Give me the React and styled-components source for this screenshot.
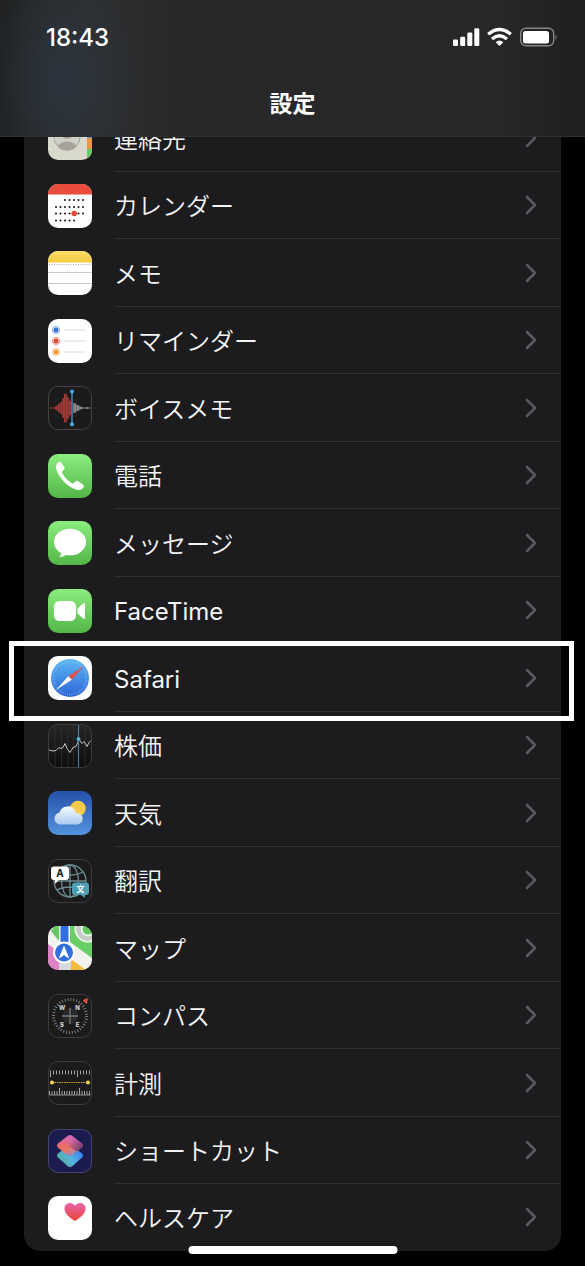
import React from 'react'
import styled, { createGlobalStyle } from 'styled-components'

const GREY = '#3c3c3e'

function Tile({ fill, stroke, children }) {
    return (
        <TileSvg viewBox="0 0 44 44" aria-hidden="true">
            <rect width="44" height="44" rx="10" fill={fill} />
            {children}
            {stroke && <rect x=".5" y=".5" width="43" height="43" rx="9.5" fill="none" stroke={stroke} />}
        </TileSvg>
    )
}

const GreenGradient = ({ id }) => (
    <linearGradient id={id} x1="0" y1="0" x2="0" y2="1">
        <stop offset="0" stopColor="#8aed7e" />
        <stop offset="1" stopColor="#53b748" />
    </linearGradient>
)

function Contacts() {
    return (
        <TileSvg viewBox="0 0 44 44" aria-hidden="true">
            <clipPath id="contactsClip"><rect width="44" height="44" rx="10" /></clipPath>
            <g clipPath="url(#contactsClip)">
                <rect width="44" height="44" fill="#d9d8cd" />
                <rect x="39" width="5" height="22" fill="#5d8fc4" />
                <rect x="39" y="22" width="5" height="11" fill="#ee9645" />
                <rect x="39" y="33" width="5" height="11" fill="#67cb6a" />
                <circle cx="19" cy="21" r="13" fill="#d0cfc4" stroke="#a6a59d" />
                <circle cx="19" cy="17" r="6" fill="#a6a39c" />
                <path d="M9.5 30c4-6 15-6 19 0-3 6-16 6-19 0z" fill="#a6a39c" />
            </g>
        </TileSvg>
    )
}

function Calendar() {
    const lines = [[16, 17, 5], [23, 8, 7], [29.5, 8, 7], [36.5, 8, 5]]
    return (
        <Tile fill="#fff">
            <path d="M0 10.5V10A10 10 0 0 1 10 0h24a10 10 0 0 1 10 10v.5z" fill="#e94b3d" />
            {lines.map(([y, x, n]) => Array.from({ length: n }, (_, i) => (
                <circle key={`${y}-${i}`} cx={x + i * 4.5} cy={y} r="1" fill="#111" />
            )))}
            <circle cx="26.2" cy="29.5" r="2.8" fill="#e5483b" />
        </Tile>
    )
}

function Notes() {
    return (
        <Tile fill="#fff">
            <defs>
                <linearGradient id="notesTop" x1="0" y1="0" x2="0" y2="1">
                    <stop offset="0" stopColor="#fbdc6b" />
                    <stop offset="1" stopColor="#f4cb3d" />
                </linearGradient>
            </defs>
            <path d="M0 11.5V10A10 10 0 0 1 10 0h24a10 10 0 0 1 10 10v1.5z" fill="url(#notesTop)" />
            <path d="M1 13.5h42" stroke="#aaa" strokeDasharray="1 1.4" />
            <path d="M0 21.5h44M0 32.5h44" stroke="#cacaca" />
        </Tile>
    )
}

function Reminders() {
    return (
        <Tile fill="#fff">
            {[[11, '#3a72dd'], [22, '#e2473c'], [33, '#f19a37']].map(([y, c]) => (
                <g key={y}>
                    <circle cx="8" cy={y} r="3.6" fill="none" stroke={c} strokeOpacity=".6" />
                    <circle cx="8" cy={y} r="2.5" fill={c} />
                    <path d={`M16 ${y}h22`} stroke="#dcdcdc" />
                </g>
            ))}
        </Tile>
    )
}

function VoiceMemos() {
    const red = [1, 1, 1, 3, 5, 8, 10, 13, 20, 29, 28, 22, 17, 14]
    const white = [10, 9, 6, 5, 3, 2, 1, 1, 2, 1, 1]
    return (
        <Tile fill="#1b1b1c" stroke="#434345">
            {red.map((h, i) => (
                <rect key={i} x={2 + i * 1.55} y={22 - h / 2} width="1.6" height={h} fill="#9c3a35" />
            ))}
            {white.map((h, i) => (
                <rect key={i} x={25.2 + i * 1.6} y={22 - h / 2} width="1.6" height={h} fill="#8a8a8e" />
            ))}
            <path d="M24 6v32" stroke="#438fc9" strokeWidth="1.4" />
            <circle cx="24" cy="5.6" r="2" fill="#51a9e8" />
            <circle cx="24" cy="38.2" r="2" fill="#51a9e8" />
        </Tile>
    )
}

function Phone() {
    return (
        <Tile fill="url(#phoneBg)">
            <defs><GreenGradient id="phoneBg" /></defs>
            <path
                d="M10 8.5q2-1.5 3.5.3L16.2 13q1 1.8-.5 3l-1.5 1.3q-.6.8.1 2c2.3 4.3 5.3 7.3 9.5 9.8q1.2.6 2-.1l1.5-1.6q1.3-1.2 3-.2l4.600 3.200q1.800 1.400.6 3.200c-2 2.700-5 3.100-8.500 1.700C18 31.500 11.500 24 8.600 16 7.500 12.500 8 10 10 8.500z"
                fill="#fff"
            />
        </Tile>
    )
}

function Messages() {
    return (
        <Tile fill="url(#messagesBg)">
            <defs><GreenGradient id="messagesBg" /></defs>
            <ellipse cx="22" cy="21" rx="16" ry="13.3" fill="#fff" />
            <path d="M13.500 30c0 3-.8 4.600-2.500 6 3 .2 6-1 8-3z" fill="#fff" />
        </Tile>
    )
}

function FaceTime() {
    return (
        <Tile fill="url(#facetimeBg)">
            <defs><GreenGradient id="facetimeBg" /></defs>
            <rect x="6" y="12" width="22" height="20" rx="5.5" fill="#fff" />
            <path d="M29.5 19.500l5.600-5q1.900-1.200 1.900.8v13.400q0 2-1.900.8l-5.600-5z" fill="#fff" />
        </Tile>
    )
}

function Safari() {
    return (
        <Tile fill="#fff">
            <defs>
                <linearGradient id="safariBg" x1="0" y1="0" x2="0" y2="1">
                    <stop offset="0" stopColor="#5bb8f3" />
                    <stop offset="1" stopColor="#2f65d8" />
                </linearGradient>
            </defs>
            <circle cx="22" cy="22" r="19" fill="url(#safariBg)" />
            <circle cx="22" cy="22" r="16.5" fill="none" stroke="#cfe6fb" strokeOpacity=".5" strokeWidth="2" strokeDasharray=".6 1.56" />
            <path d="M36 10L20.2 20.2l3.6 3.6z" fill="#e0524a" />
            <path d="M8 34l12.2-13.8 3.6 3.6z" fill="#fff" />
        </Tile>
    )
}

function Stocks() {
    return (
        <Tile fill="url(#stocksBg)" stroke={GREY}>
            <defs>
                <linearGradient id="stocksBg" x1="0" y1="0" x2="0" y2="1">
                    <stop offset="0" stopColor="#262627" />
                    <stop offset="1" stopColor="#0d0d0e" />
                </linearGradient>
            </defs>
            <path d="M7 1v42M13.5 1v42M20 1v42M25.5 1v42M37 1v42" stroke="#303032" strokeWidth=".8" />
            <path
                d="M1 26l4 1 3-.5 3-3 2 1 2-1 2-4 2 5 3 4 3-5 3-1 3-7 3 4 2-2 3 5 2-4 2-2"
                fill="none" stroke="#c6c6c6" strokeLinejoin="round"
            />
            <path d="M30.5 1v42" stroke="#3f7f9c" strokeWidth="1.2" />
            <circle cx="30.5" cy="15" r="2" fill="#51b3df" />
        </Tile>
    )
}

function Weather() {
    return (
        <Tile fill="url(#weatherBg)">
            <defs>
                <linearGradient id="weatherBg" x1="0" y1="0" x2="0" y2="1">
                    <stop offset="0" stopColor="#2551ab" />
                    <stop offset="1" stopColor="#5493dc" />
                </linearGradient>
                <linearGradient id="cloud" x1="0" y1="0" x2="0" y2="1">
                    <stop offset="0" stopColor="#f7fafd" />
                    <stop offset="1" stopColor="#a9cbef" />
                </linearGradient>
            </defs>
            <circle cx="30" cy="17.5" r="7.8" fill="#f6ca4a" />
            <g fill="url(#cloud)">
                <path d="M12 33.500a6 6 0 0 1-.5-11.900A8.500 8.500 0 0 1 27.500 20.500l.5 1.700a5.700 5.700 0 1 1 .8 11.300z" />
            </g>
        </Tile>
    )
}

function Translate() {
    return (
        <Tile fill="#1b1b1c" stroke={GREY}>
            <g fill="none" stroke="#6b8b93" strokeWidth="1.3">
                <circle cx="22" cy="22" r="16" />
                <ellipse cx="22" cy="22" rx="8.5" ry="16" />
                <path d="M22 6v32M6 22h32M9 13c7 4 19 4 26 0M9 31c7-4 19-4 26 0" />
            </g>
            <path d="M6 7.500h12a3 3 0 0 1 3 3V18a3 3 0 0 1-3 3h-7l-4 4v-4H6a3 3 0 0 1-3-3v-7.500a3 3 0 0 1 3-3z" fill="#fff" />
            <path d="M27 23.500h11a3 3 0 0 1 3 3V33a3 3 0 0 1-3 3h-1v3l-4-3h-6a3 3 0 0 1-3-3v-6.500a3 3 0 0 1 3-3z" fill="#4d9db4" />
            <IconText x="12" y="18" $size={10} fill="#1b1b1c">A</IconText>
            <IconText x="32.5" y="33" $size={8} fill="#fff">文</IconText>
        </Tile>
    )
}

function Maps() {
    return (
        <TileSvg viewBox="0 0 44 44" aria-hidden="true">
            <clipPath id="mapsClip"><rect width="44" height="44" rx="10" /></clipPath>
            <g clipPath="url(#mapsClip)">
                <rect width="44" height="44" fill="#f2f2ef" />
                <path d="M3 5L7 0h4v15z" fill="#62ca5f" />
                <path d="M22 0h22v32L22 16z" fill="#67cf66" />
                <circle cx="40" cy="3" r="12.5" fill="none" stroke="#f4f4f2" strokeWidth="2" />
                <circle cx="40" cy="3" r="9.5" fill="none" stroke="#c9cac8" strokeWidth="4" />
                <circle cx="40" cy="3" r="6.5" fill="#62ca5f" stroke="#f4f4f2" strokeWidth="2" />
                <path d="M0 18l11 8v18H0z" fill="#dd83c4" />
                <path d="M11 30h12v14H11z" fill="#d8d9dd" />
                <path d="M23 33l15 11H23z" fill="#f2bd3f" />
                <path d="M11 0h11v20H11z" fill="#fff" />
                <path d="M12.5 0h8v20h-8z" fill="#316fe0" />
                <circle cx="16" cy="26.5" r="11" fill="#fff" />
                <circle cx="16" cy="26.5" r="9" fill="#316fe0" />
                <path d="M16 19.500l5 12.300q-.3.700-1 .3L16 29l-4 3.100q-.7.400-1-.3z" fill="#fff" />
            </g>
        </TileSvg>
    )
}

function Compass() {
    return (
        <Tile fill="#1b1b1c" stroke={GREY}>
            <circle cx="22" cy="22" r="16.5" fill="none" stroke="#8f8f90" strokeWidth="3" strokeDasharray=".8 2.08" />
            <circle cx="22" cy="22" r="8" fill="#29292a" />
            <path d="M22 14v16M14 22h16" stroke="#79797b" strokeWidth="1.3" />
            <path d="M35 6.500l4.300-1.800-.8 4.800z" fill="#e4513f" stroke="#e4513f" strokeLinejoin="round" />
            <IconText x="14" y="16" $size={6} fill="#e2e2e2">W</IconText>
            <IconText x="29.5" y="16" $size={6} fill="#e2e2e2">N</IconText>
            <IconText x="14" y="32.5" $size={6} fill="#e2e2e2">S</IconText>
            <IconText x="29.5" y="32.5" $size={6} fill="#e2e2e2">E</IconText>
        </Tile>
    )
}

function Measure() {
    const top = Array.from({ length: 14 }, (_, i) => i)
    const bottom = Array.from({ length: 17 }, (_, i) => i)
    return (
        <Tile fill="#1b1b1c" stroke={GREY}>
            {top.map((i) => (
                <path key={i} d={`M${2.5 + i * 3} 9.5v${i % 9 === 0 ? 6.5 : 4}`} stroke="#a2a2a3" />
            ))}
            {bottom.map((i) => (
                <path key={i} d={`M${1.5 + i * 2.5} 34v${i % 8 === 4 ? -7 : -4}`} stroke="#a2a2a3" />
            ))}
            <path d="M1.5 34h41" stroke="#8f8f90" />
            <path d="M4 21.5h36" stroke="#c9a637" strokeDasharray="1.6 .8" />
            <circle cx="4" cy="21.5" r="2" fill="#f5d84b" />
            <circle cx="40" cy="21.5" r="2" fill="#f5d84b" />
        </Tile>
    )
}

function Shortcuts() {
    const topShape = 'M19.500 7q2.500-2 5 0l9.500 7.500q2 2 0 4L24.500 26q-2.500 2-5 0L10 18.500q-2-2 0-4z'
    return (
        <Tile fill="#1b1b50" stroke="#45456a">
            <defs>
                <linearGradient id="scTop" x1=".2" y1="1" x2=".7" y2="0">
                    <stop offset="0" stopColor="#ea6a58" />
                    <stop offset=".5" stopColor="#e5697c" />
                    <stop offset="1" stopColor="#cf66cc" />
                </linearGradient>
                <linearGradient id="scShade" x1=".5" y1=".3" x2="1" y2=".6">
                    <stop offset="0" stopColor="#3c2a62" stopOpacity="0" />
                    <stop offset="1" stopColor="#3c2a62" stopOpacity=".7" />
                </linearGradient>
                <linearGradient id="scBottom" x1="1" y1=".2" x2="0" y2=".8">
                    <stop offset="0" stopColor="#3478e8" />
                    <stop offset=".5" stopColor="#55b2e6" />
                    <stop offset="1" stopColor="#55ad8b" />
                </linearGradient>
                <linearGradient id="scMid" x1=".2" y1="0" x2=".9" y2="1">
                    <stop offset="0" stopColor="#ea6a60" />
                    <stop offset=".5" stopColor="#ea7668" />
                    <stop offset="1" stopColor="#6e97df" />
                </linearGradient>
            </defs>
            <path d="M19.500 17q2.500-2 5 0l9.500 7.500q2 2 0 4L24.500 37q-2.500 2-5 0L10 28.500q-2-2 0-4z" fill="url(#scBottom)" />
            <path d={topShape} fill="url(#scTop)" />
            <path d={topShape} fill="url(#scShade)" />
            <path d="M10 18.500l6-4 13 8-4.500 3.500q-2.500 2-5 0z" fill="url(#scMid)" />
        </Tile>
    )
}

function Health() {
    return (
        <Tile fill="#fff">
            <defs>
                <linearGradient id="heart" x1="0" y1="0" x2="0" y2="1">
                    <stop offset="0" stopColor="#e962ac" />
                    <stop offset="1" stopColor="#ec4534" />
                </linearGradient>
            </defs>
            <path
                d="M27 25C20.500 21 16.500 17 16.500 12.500 16.500 9.300 19 7 21.800 7c2.200 0 4.100 1.100 5.200 2.800C28.100 8.100 30 7 32.200 7 35 7 37.500 9.300 37.500 12.500 37.500 17 33.500 21 27 25z"
                fill="url(#heart)"
            />
        </Tile>
    )
}

const apps = [
    { name: '連絡先', Icon: Contacts },
    { name: 'カレンダー', Icon: Calendar },
    { name: 'メモ', Icon: Notes },
    { name: 'リマインダー', Icon: Reminders },
    { name: 'ボイスメモ', Icon: VoiceMemos },
    { name: '電話', Icon: Phone },
    { name: 'メッセージ', Icon: Messages },
    { name: 'FaceTime', Icon: FaceTime, latin: true },
    { name: 'Safari', Icon: Safari, latin: true, marked: true },
    { name: '株価', Icon: Stocks },
    { name: '天気', Icon: Weather },
    { name: '翻訳', Icon: Translate },
    { name: 'マップ', Icon: Maps },
    { name: 'コンパス', Icon: Compass },
    { name: '計測', Icon: Measure },
    { name: 'ショートカット', Icon: Shortcuts },
    { name: 'ヘルスケア', Icon: Health },
]

function StatusIcons() {
    return (
        <StatusSvg viewBox="0 0 106 20" aria-hidden="true">
            <g fill="#fff">
                <rect x="1" y="12.5" width="5" height="6.5" rx="1.3" />
                <rect x="8.2" y="9.8" width="5" height="9.2" rx="1.3" />
                <rect x="15.3" y="5.5" width="5" height="13.5" rx="1.3" />
                <rect x="22.3" y="1.3" width="5" height="17.7" rx="1.3" />
                <path d="M47.500 19l-3.800-3.800q3.800-3.200 7.600 0z" />
                <rect x="71" y="4" width="26" height="12.5" rx="2.5" />
                <path d="M103.500 7.500q2 2.700 0 5.400z" fill="#858587" />
            </g>
            <g fill="none" stroke="#fff" strokeWidth="3.4">
                <path d="M36.2 7.200q11.300-9.500 22.600 0" />
                <path d="M40 12q7.500-6.300 15 0" />
            </g>
            <rect x="68.7" y="1.3" width="33" height="17.5" rx="5" fill="none" stroke="#858587" strokeWidth="1.4" />
        </StatusSvg>
    )
}

function App() {
    return (
        <Page lang="ja">
            <GlobalStyle />
            <Header>
                <StatusBar>
                    <Time>18:43</Time>
                    <StatusIcons />
                </StatusBar>
                <Title>設定</Title>
            </Header>
            <List>
                {apps.map(({ name, Icon, latin, marked }) => (
                    <Row key={name} $marked={marked}>
                        <RowLink href="#">
                            <Icon />
                            <RowBody>
                                <Label $latin={latin}>{name}</Label>
                                <Chevron viewBox="0 0 12 20" aria-hidden="true">
                                    <path d="M2 2l8 8-8 8" />
                                </Chevron>
                            </RowBody>
                        </RowLink>
                    </Row>
                ))}
            </List>
            <HomeIndicator />
        </Page>
    )
}

const GlobalStyle = createGlobalStyle`
    * {
        box-sizing: border-box;
    }
    body {
        margin: 0;
        background: #000;
        color: #f4f4f5;
        font-family: Inter, "Noto Sans CJK JP", sans-serif;
    }
`
const Page = styled.main`
    position: relative;
    padding-bottom: 15px;
    overflow-x: clip;
`
const Header = styled.header`
    position: sticky;
    top: 0;
    z-index: 2;
    height: 137px;
    background:
        radial-gradient(ellipse 70px 110px at 62px 80px, rgba(44, 58, 72, .6), transparent),
        linear-gradient(90deg, #202223 0, #2a2c2e 50px, #2d2f31 100px, #28282a 180px, #28282a 490px, #1f1f20 100%);
    border-bottom: 1px solid #303032;
`
const StatusBar = styled.div`
    display: flex;
    justify-content: space-between;
    align-items: center;
    height: 74px;
    padding: 0 27px 0 46px;
`
const Time = styled.time`
    font-size: 24px;
    font-weight: 500;
    color: #fff;
`
const StatusSvg = styled.svg`
    width: 106px;
    height: 20px;
`
const Title = styled.h1`
    margin: 0;
    text-align: center;
    font-size: 23px;
    line-height: 60px;
    font-weight: 700;
    color: #fff;
`
const List = styled.ul`
    list-style: none;
    margin: -33px 24px 0;
    padding: 0;
    background: #1c1c1e;
    border-radius: 16px;
`
const RowBody = styled.div`
    flex: 1;
    display: flex;
    align-items: center;
    justify-content: space-between;
    margin-left: 22px;
    padding-right: 24px;
    border-bottom: 1px solid #303032;
`
const Row = styled.li`
    position: relative;
    height: 68px;
    &:nth-child(even), &:last-child {
        height: 67px;
    }
    &:last-child ${RowBody} {
        border-bottom-color: transparent;
    }
    ${(props) => props.$marked && `
        &::after {
            content: '';
            position: absolute;
            z-index: 1;
            inset: -3px -13px -9px -15px;
            border: 5px solid #fff;
            pointer-events: none;
        }
    `}
`
const RowLink = styled.a`
    display: flex;
    height: 100%;
    padding-left: 24px;
    color: inherit;
    text-decoration: none;
`
const TileSvg = styled.svg`
    width: 44px;
    height: 44px;
    align-self: center;
    flex: none;
`
const IconText = styled.text`
    font-size: ${(props) => props.$size}px;
    font-weight: 700;
    text-anchor: middle;
`
const Label = styled.span`
    padding-top: 4px;
    font-size: 24px;
    line-height: 32px;
    font-weight: ${(props) => (props.$latin ? 400 : 350)};
`
const Chevron = styled.svg`
    width: 12px;
    height: 20px;
    fill: none;
    stroke: #5b5b5f;
    stroke-width: 2.5;
    stroke-linecap: round;
    stroke-linejoin: round;
`
const HomeIndicator = styled.div`
    position: fixed;
    z-index: 3;
    bottom: 12px;
    left: 50%;
    width: 209px;
    height: 8px;
    border-radius: 4px;
    background: #fff;
    transform: translateX(-50%);
`

export default App
